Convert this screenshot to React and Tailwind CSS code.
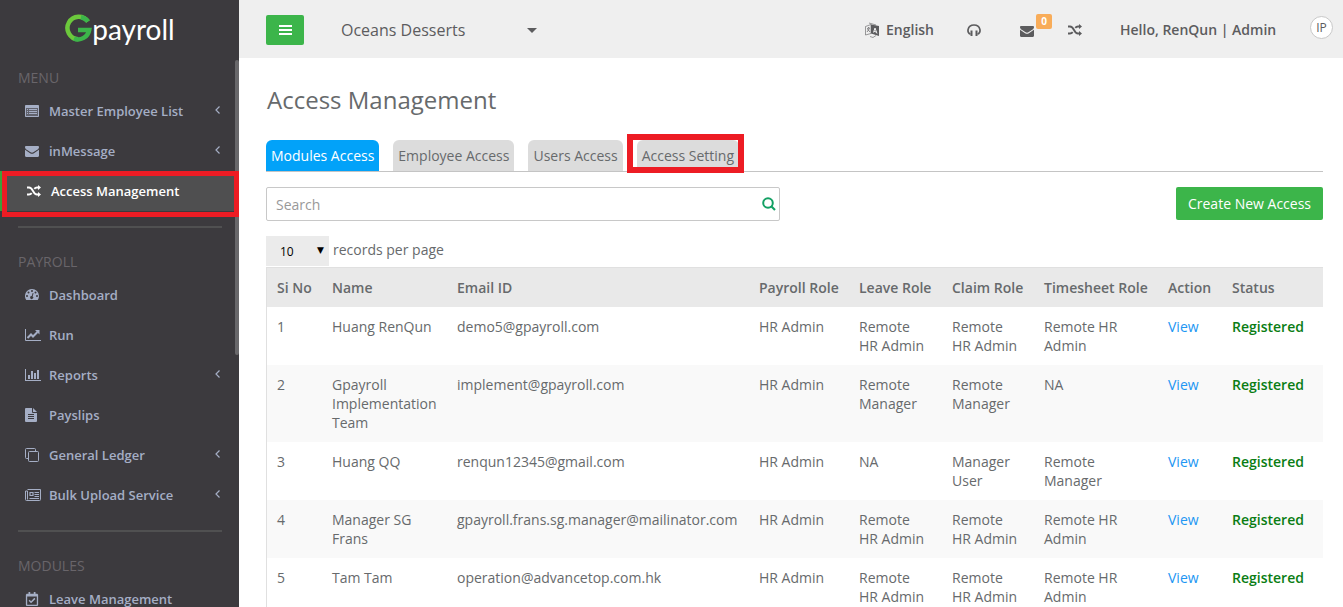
import React from "react";
import { FaRegCalendarCheck } from "react-icons/fa";

const ListIcon = () => (
  <svg viewBox="0 0 14 12" className="w-[14px] h-[12px]" fill="currentColor">
    <rect width="14" height="12" rx="1" opacity=".35" />
    <path
      fillRule="evenodd"
      d="M1 0h12a1 1 0 0 1 1 1v10a1 1 0 0 1-1 1H1a1 1 0 0 1-1-1V1a1 1 0 0 1 1-1zM1 3v8h12V3zM2 4h1v1H2zM4 4h8v1H4zM2 6h1v1H2zM4 6h8v1H4zM2 8h1v1H2zM4 8h8v1H4z"
    />
  </svg>
);

const EnvelopeIcon = () => (
  <svg viewBox="0 0 14 11" className="w-[14px] h-[11px]" fill="currentColor">
    <path d="M1.200 0h11.600C13.500 0 14 .5 14 1.200c0 .9-.7 1.700-1.400 2.200L8.400 6.300c-.9.600-1.900.6-2.800 0L1.400 3.400C.7 2.900 0 2.100 0 1.200 0 .5.5 0 1.200 0z" />
    <path d="M0 3.500c.2.300.5.500.8.700l4.300 3c1.200.8 2.600.8 3.800 0l4.300-3c.3-.2.6-.4.800-.7v6.300c0 .7-.5 1.200-1.200 1.200H1.200C.5 11 0 10.500 0 9.800z" />
  </svg>
);

const ShuffleIcon = () => (
  <svg viewBox="0 0 14 12" className="w-[14px] h-3" fill="none" stroke="currentColor">
    <path d="M0 2.500h2c2 0 3 1.500 4 3.500s2 3.500 4 3.500h1.500M0 9.500h2c1.200 0 2-.5 2.700-1.400M7.300 3.900C8 3 8.800 2.500 10 2.500h1.500" strokeWidth="1.800" />
    <path d="M11 0l3 2.500-3 2.500zM11 7l3 2.500-3 2.500z" fill="currentColor" stroke="none" />
  </svg>
);

const CloneIcon = () => (
  <svg viewBox="0 0 14 14" className="w-[14px] h-[14px]" fill="none" stroke="currentColor">
    <rect x="3.5" y="3.5" width="10" height="10" rx="1" />
    <path d="M3 10.500H1.500a1 1 0 0 1-1-1v-8a1 1 0 0 1 1-1h8a1 1 0 0 1 1 1V3" />
  </svg>
);

const LineChartIcon = () => (
  <svg viewBox="0 0 16 12" className="w-4 h-3" fill="none" stroke="currentColor">
    <path d="M.5 0v11.500H16" />
    <path d="M2.500 9 6 5.500l2 2 4.500-4.500" strokeWidth="2" />
    <path d="M10 1h4.500v4.500z" fill="currentColor" stroke="none" />
  </svg>
);

const BarChartIcon = () => (
  <svg viewBox="0 0 16 12" className="w-4 h-3" fill="currentColor">
    <path d="M0 0h1v11h15v1H0zM3 6h2v4H3zM6 2h2v8H6zM9 4h2v6H9zM12 1h2v9h-2z" />
  </svg>
);

const FileIcon = () => (
  <svg viewBox="0 0 12 14" className="w-3 h-[14px]" fill="currentColor">
    <path
      fillRule="evenodd"
      d="M1 0h6v4a1 1 0 0 0 1 1h4v8a1 1 0 0 1-1 1H1a1 1 0 0 1-1-1V1a1 1 0 0 1 1-1zM8 0l4 4H8zM3 6v1h6V6zM3 8v1h6V8zM3 10v1h6v-1z"
    />
  </svg>
);

const NewsIcon = () => (
  <svg viewBox="0 0 16 12" className="w-4 h-3" fill="none" stroke="currentColor">
    <path d="M2.500.5h13v10a1 1 0 0 1-1 1h-13a1 1 0 0 1-1-1V2h2v8.500" />
    <path d="M5 3.500h3v3H5zM9.500 3.500H14M9.500 5.500H14M9.500 7.500H14M4.500 9.500H14" strokeWidth="1.200" />
  </svg>
);

const GaugeIcon = () => (
  <svg viewBox="0 0 14 12" className="w-[14px] h-[12px]" fill="currentColor">
    <path
      fillRule="evenodd"
      d="M7 0a7 7 0 0 1 7 7c0 1.400-.4 2.700-1.100 3.700-.2.200-.3.300-.6.300H1.700c-.3 0-.5-.1-.6-.3A7 7 0 0 1 7 0zM2 6a1 1 0 1 0 0 2 1 1 0 0 0 0-2zM3.500 2.500a1 1 0 1 0 0 2 1 1 0 0 0 0-2zM7 1a1 1 0 1 0 0 2 1 1 0 0 0 0-2zM10.500 2.500a1 1 0 1 0 0 2 1 1 0 0 0 0-2zM12 6a1 1 0 1 0 0 2 1 1 0 0 0 0-2zM7.700 4 6.700 7.100a1.500 1.500 0 1 0 .9.300l1-3.100z"
    />
  </svg>
);

const AngleLeft = () => (
  <svg viewBox="0 0 5 8" className="w-[5px] h-2 -mt-[2px]" fill="none" stroke="currentColor">
    <path d="M4.500.5 1 4l3.500 3.500" strokeWidth="1.200" />
  </svg>
);

const menu = [
  {
    title: "Menu",
    items: [
      { label: "Master Employee List", icon: <ListIcon />, sub: true },
      { label: "inMessage", icon: <EnvelopeIcon />, sub: true },
      { label: "Access Management", icon: <ShuffleIcon />, active: true },
    ],
  },
  {
    title: "Payroll",
    items: [
      { label: "Dashboard", icon: <GaugeIcon /> },
      { label: "Run", icon: <LineChartIcon /> },
      { label: "Reports", icon: <BarChartIcon />, sub: true },
      { label: "Payslips", icon: <FileIcon /> },
      { label: "General Ledger", icon: <CloneIcon />, sub: true },
      { label: "Bulk Upload Service", icon: <NewsIcon />, sub: true },
    ],
  },
  {
    title: "Modules",
    items: [{ label: "Leave Management", icon: <FaRegCalendarCheck size={14} /> }],
  },
];

const tabs = ["Modules Access", "Employee Access", "Users Access", "Access Setting"];

const columns = [
  { label: "Si No", width: "w-[55px]" },
  { label: "Name", width: "w-[125px]" },
  { label: "Email ID", width: "" },
  { label: "Payroll Role", width: "w-[100px]" },
  { label: "Leave Role", width: "w-[93px]" },
  { label: "Claim Role", width: "w-[92px]" },
  { label: "Timesheet Role", width: "w-[124px]" },
  { label: "Action", width: "w-[64px]" },
  { label: "Status", width: "w-[101px]" },
];

const users = [
  ["Huang RenQun", "demo5@gpayroll.com", "HR Admin", "Remote HR Admin", "Remote HR Admin", "Remote HR Admin"],
  ["Gpayroll Implementation Team", "implement@gpayroll.com", "HR Admin", "Remote Manager", "Remote Manager", "NA"],
  ["Huang QQ", "renqun12345@gmail.com", "HR Admin", "NA", "Manager User", "Remote Manager"],
  ["Manager SG Frans", "gpayroll.frans.sg.manager@mailinator.com", "HR Admin", "Remote HR Admin", "Remote HR Admin", "Remote HR Admin"],
  ["Tam Tam", "operation@advancetop.com.hk", "HR Admin", "Remote HR Admin", "Remote HR Admin", "Remote HR Admin"],
];

function Logo() {
  return (
    <a href="#" className="flex justify-center h-[68px] pt-3">
      <svg viewBox="0 0 28 28" className="w-7 h-7 mt-[2px]" fill="none" strokeWidth="4.500">
        <path d="M24 7.500A11.300 11.300 0 1 0 14 25.300" stroke="#6cc83c" />
        <path d="M17 3.200A11.300 11.300 0 0 1 24 7.500" stroke="#3cb54a" />
        <path d="M14 16h11.200A11.300 11.300 0 0 1 10 24.600" stroke="#3cb54a" />
      </svg>
      <span className="font-['Lato',sans-serif] text-[28px] leading-[34px] text-white">payroll</span>
    </a>
  );
}

function MenuItem({ item }) {
  return (
    <li className="relative">
      <a
        href="#"
        className={
          item.active
            ? "flex items-center h-10 pl-6 pr-[19px] border-l-3 border-[#3ba23b] bg-[#4f4f50] text-white"
            : "flex items-center h-10 pl-[25px] pr-[19px] text-[#a5aec5]"
        }
      >
        <span className="w-6 shrink-0">{item.icon}</span>
        <span className="flex-1 text-[13px] font-semibold">{item.label}</span>
        {item.sub && <AngleLeft />}
      </a>
      {item.active && (
        <div className="absolute left-[2px] right-0 top-0 h-[46px] border-5 border-[#ed1c24] z-10 pointer-events-none" />
      )}
    </li>
  );
}

function Sidebar() {
  return (
    <aside className="relative w-[239px] shrink-0 bg-[#3c3a3e] overflow-hidden">
      <Logo />
      <nav>
        {menu.map((group, i) => (
          <section key={group.title}>
            {i > 0 && <hr className="ml-[18px] mr-[17px] mt-[15px] mb-6 border-t-2 border-[#505051]" />}
            <h3 className="pl-[18px] mb-[3px] text-sm leading-5 uppercase text-[#69656a]">
              {group.title}
            </h3>
            <ul>
              {group.items.map((item) => (
                <MenuItem key={item.label} item={item} />
              ))}
            </ul>
          </section>
        ))}
      </nav>
      {/* scroll thumb */}
      <div className="absolute right-0 top-[60px] w-1 h-[295px] rounded-sm bg-[#69686b]" />
    </aside>
  );
}

function Header() {
  return (
    <header className="flex items-center h-[58px] pl-[27px] pr-[10px] pb-px bg-[#efefef] text-[#5c5c5e] font-semibold">
      <button aria-label="Toggle menu" className="flex items-center justify-center w-[38px] h-[30px] mt-[3px] rounded-xs bg-[#3cb54a]">
        <svg viewBox="0 0 13 10" className="w-[13px] h-[10px]" fill="#fff">
          <path d="M0 0h13v2H0zM0 4h13v2H0zM0 8h13v2H0z" />
        </svg>
      </button>
      <button className="flex items-center justify-between w-[196px] ml-[37px] mt-[3px] text-base font-normal">
        Oceans Desserts
        <svg viewBox="0 0 10 5" className="w-[10px] h-[5px]" fill="currentColor">
          <path d="M0 0h10L5 5z" />
        </svg>
      </button>
      <div className="flex items-center ml-auto mt-[3px]">
        <a href="#" className="flex items-center gap-[7px] text-sm">
          <svg viewBox="0 0 14 16" className="w-[14px] h-4" fill="none" stroke="currentColor">
            <path d="M.5 4.500 6 2.500v9L.5 13zM4 1l7 2M5 14.500l3 1 3-2" strokeWidth=".6" />
            <path d="M2 6.500l3-.5M3.500 5v1M4.500 6.500 2 10M2.500 7l2.500 3" strokeWidth=".7" />
            <path d="M6 2.500 14 4v10l-8-2.500z" fill="currentColor" stroke="none" />
            <path d="M8.500 10.500 10 6l2 5.500M9 9.500l2.500.5" stroke="#fff" strokeWidth=".9" />
          </svg>
          English
        </a>
        <a href="#" aria-label="Support" className="ml-[33px]">
          <svg viewBox="0 0 14 12" className="w-[14px] h-3" fill="none" stroke="currentColor">
            <path d="M3.500 10.200C-.5 9.500 0 1 7 1s7.500 8.500 3.500 9.200" strokeWidth="1.700" />
            <path d="M4.500 6.500V12M9.500 6.500V12" strokeWidth="2" />
          </svg>
        </a>
        <a href="#" aria-label="Messages" className="relative ml-[39px] mt-[3px]">
          <EnvelopeIcon />
          <span className="absolute -top-[12px] left-4 w-4 h-[15px] rounded-xs bg-[#f8ac59] text-white text-[10px] leading-[15px] font-bold text-center">
            0
          </span>
        </a>
        <a href="#" aria-label="Switch" className="ml-[34px]">
          <ShuffleIcon />
        </a>
        <span className="ml-[38px] mr-[30px] min-w-[160px] text-sm">Hello, RenQun | Admin</span>
        <button className="w-[23px] h-[23px] -mt-[5px] rounded-full border border-[#c8c8c8] bg-white text-xs font-normal">
          IP
        </button>
      </div>
    </header>
  );
}

function Tabs() {
  return (
    <div role="tablist" className="flex gap-[14px] mt-6 border-b border-[#c4c4c4]">
      {tabs.map((tab, i) => (
        <div key={tab} className="relative">
          <button
            role="tab"
            aria-selected={i === 0}
            className={
              i === 0
                ? "h-[31px] px-[5px] rounded-t-md bg-[#02a2f9] text-white"
                : "h-[31px] px-[5px] rounded-t-md bg-[#dcdcdc] text-[#676a6c]"
            }
          >
            {tab}
          </button>
          {i === 3 && (
            <div className="absolute -left-[10px] -right-[5px] -top-[6px] h-[39px] border-6 border-[#ed1c24] pointer-events-none" />
          )}
        </div>
      ))}
    </div>
  );
}

function AccessTable() {
  return (
    <div className="border-l border-t border-[#e0e0e0]">
      <table className="w-full table-fixed text-left leading-[19px]">
        <thead>
          <tr className="bg-[#e9e9e9]">
            {columns.map((col) => (
              <th key={col.label} className={`${col.width} p-[10px] font-semibold whitespace-nowrap`}>
                {col.label}
              </th>
            ))}
          </tr>
        </thead>
        <tbody>
          {users.map((user, i) => (
            <tr key={user[1]} className="align-top even:bg-[#f9f9f9]">
              <td className="p-[10px]">{i + 1}</td>
              {user.map((value, j) => (
                <td key={j} className="p-[10px]">{value}</td>
              ))}
              <td className="p-[10px]">
                <a href="#" className="text-[#2196f3]">View</a>
              </td>
              <td className="p-[10px] font-semibold text-[#0a7d14]">Registered</td>
            </tr>
          ))}
        </tbody>
      </table>
    </div>
  );
}

export default function App() {
  return (
    <div className="flex h-screen overflow-hidden bg-white font-['Open_Sans',sans-serif] text-sm text-[#676a6c]">
      <Sidebar />
      <div className="flex-1 min-w-0">
        <Header />
        <main className="pl-[27px] pr-5 pt-[26px]">
          <h1 className="pl-px text-2xl leading-8">Access Management</h1>
          <Tabs />
          <div className="flex items-start justify-between mt-[15px]">
            <div className="relative w-[514px]">
              <input
                type="text"
                placeholder="Search"
                aria-label="Search"
                className="w-full h-[34px] pl-[9px] pr-8 border border-[#c8c8c8] rounded-xs placeholder:text-[#999]"
              />
              <svg viewBox="0 0 14 14" className="absolute right-1 top-[10px] w-[14px] h-[14px]" fill="none" stroke="#13a064">
                <circle cx="6" cy="6" r="4.800" strokeWidth="2" />
                <path d="M9 9l4 4" strokeWidth="2.200" />
              </svg>
            </div>
            <button className="h-[33px] px-3 rounded-xs bg-[#3cb54a] text-white">Create New Access</button>
          </div>
          <label className="flex items-center gap-1 mt-[15px] mb-px">
            <span className="relative">
              <select className="block appearance-none w-[63px] h-[30px] pl-[14px] pt-[2px] bg-[#ebebeb] text-xs text-black">
                <option>10</option>
              </select>
              <span className="absolute right-[5px] top-[6px] text-[9px] leading-4 text-black font-['DejaVu_Sans',sans-serif] pointer-events-none">▼</span>
            </span>
            <span className="pb-[2px]">records per page</span>
          </label>
          <AccessTable />
        </main>
      </div>
    </div>
  );
}
